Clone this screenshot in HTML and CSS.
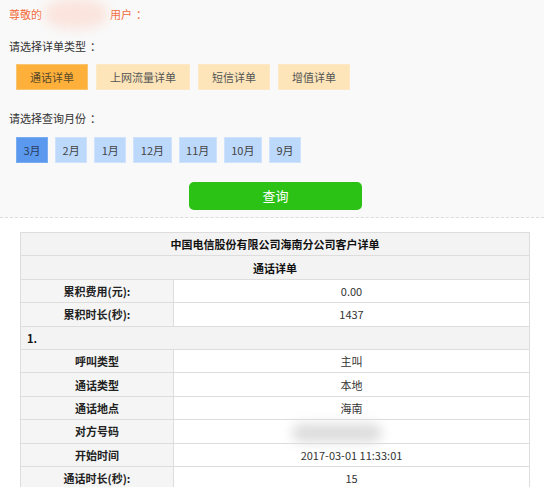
FILE: index.html
```html
<!DOCTYPE html>
<html lang="zh">
<head>
<meta charset="utf-8">
<title>客户详单</title>
<link rel="stylesheet" href="styles.css">
</head>
<body>
<div class="top">
  <div class="greet">尊敬的<span class="mask"></span>用户<span class="colon">：</span></div>
  <div class="label l1">请选择详单类型<span class="colon">：</span></div>
  <div class="types">
    <span class="tbtn on">通话详单</span>
    <span class="tbtn">上网流量详单</span>
    <span class="tbtn">短信详单</span>
    <span class="tbtn">增值详单</span>
  </div>
  <div class="label l2">请选择查询月份<span class="colon">：</span></div>
  <div class="months">
    <span class="mbtn on">3月</span>
    <span class="mbtn">2月</span>
    <span class="mbtn">1月</span>
    <span class="mbtn">12月</span>
    <span class="mbtn">11月</span>
    <span class="mbtn">10月</span>
    <span class="mbtn">9月</span>
  </div>
  <div class="qrow"><span class="query">查询</span></div>
</div>
<div class="bottom">
  <table class="bill">
    <colgroup><col class="c1"><col class="c2"></colgroup>
    <tr class="head"><td colspan="2">中国电信股份有限公司海南分公司客户详单</td></tr>
    <tr class="head"><td colspan="2">通话详单</td></tr>
    <tr><th>累积费用(元):</th><td>0.00</td></tr>
    <tr><th>累积时长(秒):</th><td>1437</td></tr>
    <tr class="num"><td colspan="2">1.</td></tr>
    <tr><th>呼叫类型</th><td>主叫</td></tr>
    <tr><th>通话类型</th><td>本地</td></tr>
    <tr><th>通话地点</th><td>海南</td></tr>
    <tr><th>对方号码</th><td><span class="blur"></span></td></tr>
    <tr><th>开始时间</th><td>2017-03-01 11:33:01</td></tr>
    <tr><th>通话时长(秒):</th><td>15</td></tr>
  </table>
</div>
</body>
</html>
```
FILE: styles.css
```css
html, body {
  margin: 0;
  padding: 0;
  background: #ffffff;
  font-family: "Noto Sans CJK SC", "Noto Sans", sans-serif;
  font-size: 11px;
  color: #333;
}
.top {
  background: #f9f9f9;
  padding: 4px 0 7px 0;
  border-bottom: 1px dashed #dcdcdc;
}
.greet {
  height: 20px;
  line-height: 20px;
  padding-left: 9px;
  color: #f36b3b;
  display: flex;
  align-items: center;
}
.colon {
  padding-left: 4px;
}
.mask {
  display: inline-block;
  width: 64px;
  height: 30px;
  margin: -8px 2px -8px 2px;
  border-radius: 45%;
  background: #fbe2da;
  filter: blur(6px);
  opacity: 0.9;
}
.label {
  line-height: 20px;
  padding-left: 9px;
  color: #333;
}
.l1 { margin-top: 12px; }
.l2 { margin-top: 18px; }
.types {
  display: flex;
  gap: 8px;
  padding-left: 16px;
  margin-top: 8px;
}
.tbtn {
  height: 26px;
  line-height: 26px;
  padding: 0 14px;
  background: #fde5b9;
  color: #555;
  box-shadow: inset 0 0 0 1px #fde9c6;
}
.tbtn.on {
  background: #feb03b;
  color: #5a4a2a;
  box-shadow: inset 0 0 0 1px #f9c66f;
}
.months {
  display: flex;
  gap: 7px;
  padding-left: 16px;
  margin-top: 9px;
}
.mbtn {
  height: 26px;
  line-height: 26px;
  padding: 0 7.5px;
  background: #bcd9fc;
  color: #444;
  box-shadow: inset 0 0 0 1px #cfe3fd;
}
.mbtn.on {
  background: #5b99ee;
  color: #2a3e5e;
  box-shadow: inset 0 0 0 1px #7aacf1;
}
.qrow {
  display: flex;
  justify-content: center;
  padding-left: 7px;
  margin-top: 19px;
}
.query {
  width: 173px;
  height: 28px;
  line-height: 28px;
  text-align: center;
  background: #2bc115;
  color: #fff;
  font-size: 13px;
  border-radius: 5px;
}
.bottom {
  padding: 14px 0 0 20px;
}
.bill {
  width: 510px;
  border-collapse: collapse;
  table-layout: fixed;
  border: 1px solid #dddddd;
}
.bill col.c1 { width: 153px; }
.bill th, .bill td {
  height: 22.4px;
  padding: 0;
  border: 1px solid #dddddd;
  text-align: center;
  font-size: 11px;
  line-height: 14px;
}
.bill th {
  background: #f5f5f5;
  font-weight: bold;
  color: #222;
}
.bill td {
  background: #fff;
  color: #333;
}
.bill tr.head td {
  background: #f3f3f3;
  font-weight: bold;
  color: #111;
}
.bill tr.num td {
  background: #f3f3f3;
  font-weight: bold;
  text-align: left;
  padding-left: 6px;
  color: #111;
}
.blur {
  display: inline-block;
  width: 90px;
  height: 18px;
  margin: -6px 0 -6px -30px;
  background: #dcdcdc;
  border-radius: 10px;
  filter: blur(6px);
  vertical-align: middle;
}
```
